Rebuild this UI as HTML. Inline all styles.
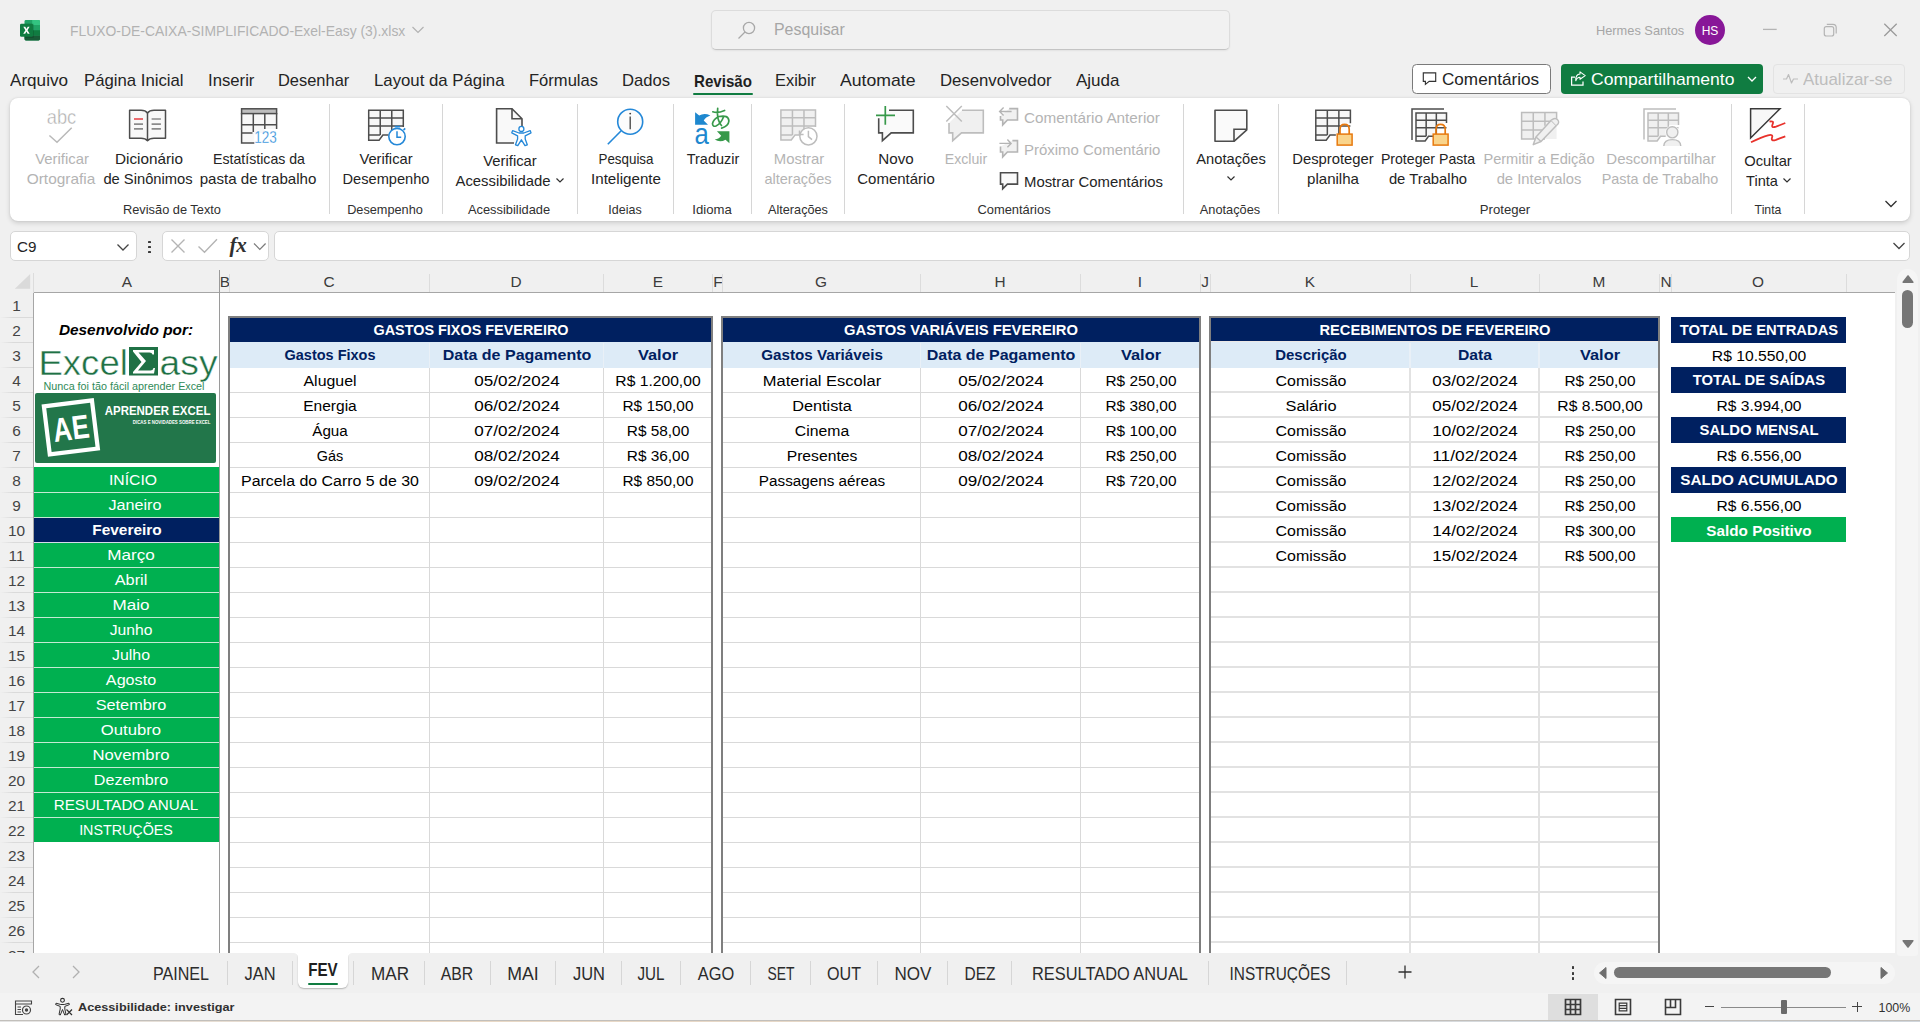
<!DOCTYPE html><html><head><meta charset="utf-8"><title>Excel</title><style>
*{box-sizing:border-box;margin:0;padding:0}
html,body{width:1920px;height:1022px;overflow:hidden;background:#f0f0f0;font-family:"Liberation Sans",sans-serif;}
#root{position:relative;width:1920px;height:1022px;overflow:hidden;background:#f0f0f0}
.t{position:absolute;white-space:nowrap;font-family:"Liberation Sans",sans-serif;color:#242424}
svg{position:absolute;overflow:visible}
.tab{font-size:17px;color:#242424;}
.tabb{font-size:16.4px;color:#1f1f1f;font-weight:bold;}
.ttl{font-size:14.4px;color:#b2b2b2;}
.srch{font-size:16.6px;color:#a6a6a6;}
.rl{font-size:14.6px;color:#242424;}
.rld{font-size:14.6px;color:#b4b4b4;}
.gl{font-size:12.6px;color:#303030;}
.hd{font-size:15.4px;color:#3c3c3c;}
.c{font-size:15.3px;color:#000;}
.cn{font-size:15.4px;color:#000;}
.cb{font-size:15px;color:#fff;font-weight:bold;}
.cbn{font-size:15px;color:#002060;font-weight:bold;}
.sb{font-size:15.3px;color:#fff;}
.sbb{font-size:15px;color:#fff;font-weight:bold;}
.st{font-size:16.4px;color:#2b2b2b;}
.stb{font-size:16.4px;color:#1f1f1f;font-weight:bold;}
.stat{font-size:11.8px;color:#303030;font-weight:bold;}
.dev{font-size:15.4px;color:#000;font-weight:bold;font-style:italic;}
</style></head><body><div id="root">
<svg style="left:20px;top:19.5px" width="20" height="20.5" viewBox="0 0 20 20" preserveAspectRatio="none">
<rect x="4.5" y="0" width="15.5" height="20" rx="1.4" fill="#21a366"/>
<path d="M12.2 0 H18.6 Q20 0 20 1.4 V5 H12.2 Z" fill="#33c481"/>
<rect x="4.5" y="5" width="7.7" height="5" fill="#107c41"/>
<rect x="12.2" y="5" width="7.8" height="5" fill="#21a366"/>
<rect x="4.5" y="10" width="7.7" height="5" fill="#185c37"/>
<rect x="12.2" y="10" width="7.8" height="5" fill="#107c41"/>
<path d="M4.5 15 H20 V18.6 Q20 20 18.6 20 H5.9 Q4.5 20 4.5 18.6 Z" fill="#185c37"/>
<rect x="4.5" y="3.7" width="9.2" height="13.6" fill="#000" opacity="0.18"/>
<rect x="0" y="3.7" width="13" height="12.6" rx="1.3" fill="#107c41"/>
<path d="M3.3 6.5 L5.3 6.5 L6.5 8.9 L7.7 6.5 L9.6 6.5 L7.5 10 L9.7 13.5 L7.7 13.5 L6.4 11.1 L5.2 13.5 L3.2 13.5 L5.4 10 Z" fill="#fff"/>
</svg>
<div class="t ttl" style="left:70px;top:18.5px;line-height:24px;transform:scaleX(0.9662);transform-origin:left center;">FLUXO-DE-CAIXA-SIMPLIFICADO-Exel-Easy (3).xlsx</div>
<svg style="left:411px;top:25px" width="14" height="10" viewBox="0 0 14 10"><path d="M1.5 2 L7 7.5 L12.5 2" fill="none" stroke="#b2b2b2" stroke-width="1.2"/></svg>
<div style="position:absolute;left:711px;top:10px;width:519px;height:40px;border:1px solid #dcdcdc;border-bottom:1px solid #c4c4c4;border-radius:5px;background:#f1f1f1;box-shadow:0 1px 2px rgba(0,0,0,0.06)"></div>
<svg style="left:736px;top:20px" width="22" height="20" viewBox="0 0 22 20"><circle cx="13" cy="8" r="5.6" fill="none" stroke="#a8a8a8" stroke-width="1.3"/><path d="M9 12 L2.5 18.5" stroke="#a8a8a8" stroke-width="1.3" fill="none"/></svg>
<div class="t srch" style="left:773.5px;top:17.5px;line-height:24px;transform:scaleX(0.9591);transform-origin:left center;">Pesquisar</div>
<div class="t " style="left:1596px;top:18.5px;line-height:24px;font-size:12.8px;color:#a6a6a6">Hermes Santos</div>
<div style="position:absolute;left:1695px;top:15px;width:30px;height:30px;border-radius:50%;background:#881798"></div>
<div class="t " style="left:1695.0px;top:18.5px;width:30px;line-height:24px;text-align:center;font-size:12px;color:#fff">HS</div>
<svg style="left:1760px;top:20px" width="140" height="22" viewBox="0 0 140 22"><path d="M3 9.4 H16.7" stroke="#b4b4b4" stroke-width="1.3"/><rect x="64.3" y="6.6" width="9.4" height="9.4" rx="2" fill="none" stroke="#b4b4b4" stroke-width="1.2"/><path d="M66.8 4.3 H73 Q76.2 4.3 76.2 7.5 V13.5" fill="none" stroke="#b4b4b4" stroke-width="1.2"/><path d="M124.3 3.8 L136.7 16 M136.7 3.8 L124.3 16" stroke="#9a9a9a" stroke-width="1.25"/></svg>
<div class="t tab" style="left:9.5px;top:69.0px;line-height:24px;transform:scaleX(1.0062);transform-origin:left center;">Arquivo</div>
<div class="t tab" style="left:84.25px;top:69.0px;line-height:24px;transform:scaleX(0.9840);transform-origin:left center;">Página Inicial</div>
<div class="t tab" style="left:208.2px;top:69.0px;line-height:24px;transform:scaleX(0.9824);transform-origin:left center;">Inserir</div>
<div class="t tab" style="left:278.25px;top:69.0px;line-height:24px;transform:scaleX(0.9666);transform-origin:left center;">Desenhar</div>
<div class="t tab" style="left:374px;top:69.0px;line-height:24px;transform:scaleX(0.9862);transform-origin:left center;">Layout da Página</div>
<div class="t tab" style="left:529px;top:69.0px;line-height:24px;transform:scaleX(0.9739);transform-origin:left center;">Fórmulas</div>
<div class="t tab" style="left:622px;top:69.0px;line-height:24px;transform:scaleX(0.9768);transform-origin:left center;">Dados</div>
<div class="t tabb" style="left:693.5px;top:69.0px;line-height:24px;transform:scaleX(0.9221);transform-origin:left center;">Revisão</div>
<div class="t tab" style="left:775px;top:69.0px;line-height:24px;transform:scaleX(0.9645);transform-origin:left center;">Exibir</div>
<div class="t tab" style="left:840px;top:69.0px;line-height:24px;transform:scaleX(1.0376);transform-origin:left center;">Automate</div>
<div class="t tab" style="left:940px;top:69.0px;line-height:24px;transform:scaleX(0.9833);transform-origin:left center;">Desenvolvedor</div>
<div class="t tab" style="left:1076px;top:69.0px;line-height:24px;transform:scaleX(1.0005);transform-origin:left center;">Ajuda</div>
<div style="position:absolute;left:693px;top:92.5px;width:60px;height:2.8px;background:#107c41;border-radius:1.4px"></div>
<div style="position:absolute;left:1412px;top:64px;width:139px;height:30px;border:1px solid #7a7a7a;border-radius:4.5px;background:#fff"></div>
<svg style="left:0px;top:0px" width="1920" height="100" viewBox="0 0 1920 100"><path d="M1423.3 72.8 H1435.7 V81.3 H1429.2 L1425.4 84.4 V81.3 H1423.3 Z" fill="none" stroke="#333" stroke-width="1.15"/></svg>
<div class="t tab" style="left:1442px;top:68.0px;line-height:24px;transform:scaleX(1.0065);transform-origin:left center;">Comentários</div>
<div style="position:absolute;left:1561px;top:64px;width:202px;height:30px;border-radius:4px;background:#107c41"></div>
<svg style="left:0px;top:0px" width="1920" height="100" viewBox="0 0 1920 100"><path d="M1575 77 H1571.6 V85.2 H1583 V81.6" fill="none" stroke="#fff" stroke-width="1.25"/><path d="M1580 71.9 L1585.2 75.6 L1580 79.3 V77.2 Q1577 77.3 1575.8 80.8 Q1575.4 74.3 1580 74 Z" fill="none" stroke="#fff" stroke-width="1.1" stroke-linejoin="round"/></svg>
<div class="t tab" style="left:1591px;top:68.0px;line-height:24px;transform:scaleX(1.0331);transform-origin:left center;color:#fff">Compartilhamento</div>
<svg style="left:1746px;top:75px" width="12" height="8" viewBox="0 0 12 8"><path d="M2 2 L6 6 L10 2" fill="none" stroke="#fff" stroke-width="1.3"/></svg>
<div style="position:absolute;left:1773px;top:64px;width:132px;height:30px;border:1px solid #e3e3e3;border-radius:4px;background:#f0f0f0"></div>
<svg style="left:1782px;top:72px" width="18" height="14" viewBox="0 0 18 14"><path d="M1 7 H4.5 L6.5 2.5 L9.5 11 L11.5 7 H16" fill="none" stroke="#bdbdbd" stroke-width="1.2" stroke-linejoin="round"/></svg>
<div class="t tab" style="left:1803px;top:68.0px;line-height:24px;transform:scaleX(0.9971);transform-origin:left center;color:#bdbdbd">Atualizar-se</div>
<div style="position:absolute;left:10px;top:98px;width:1900px;height:123px;background:#fff;border-radius:8px;box-shadow:0 2px 5px rgba(0,0,0,0.15),0 0 2px rgba(0,0,0,0.10)"></div>
<div style="position:absolute;left:329px;top:104px;width:1px;height:110px;background:#d6d6d6"></div>
<div style="position:absolute;left:442px;top:104px;width:1px;height:110px;background:#d6d6d6"></div>
<div style="position:absolute;left:577px;top:104px;width:1px;height:110px;background:#d6d6d6"></div>
<div style="position:absolute;left:673px;top:104px;width:1px;height:110px;background:#d6d6d6"></div>
<div style="position:absolute;left:751px;top:104px;width:1px;height:110px;background:#d6d6d6"></div>
<div style="position:absolute;left:844px;top:104px;width:1px;height:110px;background:#d6d6d6"></div>
<div style="position:absolute;left:1183px;top:104px;width:1px;height:110px;background:#d6d6d6"></div>
<div style="position:absolute;left:1278px;top:104px;width:1px;height:110px;background:#d6d6d6"></div>
<div style="position:absolute;left:1731px;top:104px;width:1px;height:110px;background:#d6d6d6"></div>
<div style="position:absolute;left:1804px;top:104px;width:1px;height:110px;background:#d6d6d6"></div>
<div class="t gl" style="left:-28.5px;top:197.5px;width:400px;line-height:24px;text-align:center;transform:scaleX(1.0163);transform-origin:center center;">Revisão de Texto</div>
<div class="t gl" style="left:185.39999999999998px;top:197.5px;width:400px;line-height:24px;text-align:center;transform:scaleX(1.0107);transform-origin:center center;">Desempenho</div>
<div class="t gl" style="left:309.4px;top:197.5px;width:400px;line-height:24px;text-align:center;transform:scaleX(1.0211);transform-origin:center center;">Acessibilidade</div>
<div class="t gl" style="left:424.9px;top:197.5px;width:400px;line-height:24px;text-align:center;transform:scaleX(0.9889);transform-origin:center center;">Ideias</div>
<div class="t gl" style="left:511.75px;top:197.5px;width:400px;line-height:24px;text-align:center;transform:scaleX(1.0444);transform-origin:center center;">Idioma</div>
<div class="t gl" style="left:597.5px;top:197.5px;width:400px;line-height:24px;text-align:center;transform:scaleX(1.0079);transform-origin:center center;">Alterações</div>
<div class="t gl" style="left:814.1px;top:197.5px;width:400px;line-height:24px;text-align:center;transform:scaleX(1.0255);transform-origin:center center;">Comentários</div>
<div class="t gl" style="left:1030.25px;top:197.5px;width:400px;line-height:24px;text-align:center;transform:scaleX(1.0161);transform-origin:center center;">Anotações</div>
<div class="t gl" style="left:1304.75px;top:197.5px;width:400px;line-height:24px;text-align:center;transform:scaleX(1.0450);transform-origin:center center;">Proteger</div>
<div class="t gl" style="left:1568.2px;top:197.5px;width:400px;line-height:24px;text-align:center;transform:scaleX(0.9730);transform-origin:center center;">Tinta</div>
<div class="t rld" style="left:-138.1px;top:147.0px;width:400px;line-height:24px;text-align:center;transform:scaleX(1.0191);transform-origin:center center;">Verificar</div>
<div class="t rld" style="left:-138.75px;top:167.0px;width:400px;line-height:24px;text-align:center;transform:scaleX(1.0552);transform-origin:center center;">Ortografia</div>
<div class="t rl" style="left:-51.5px;top:147.0px;width:400px;line-height:24px;text-align:center;transform:scaleX(1.0475);transform-origin:center center;">Dicionário</div>
<div class="t rl" style="left:-52.099999999999994px;top:167.0px;width:400px;line-height:24px;text-align:center;transform:scaleX(1.0089);transform-origin:center center;">de Sinônimos</div>
<div class="t rl" style="left:58.5px;top:147.0px;width:400px;line-height:24px;text-align:center;transform:scaleX(0.9690);transform-origin:center center;">Estatísticas da</div>
<div class="t rl" style="left:58.39999999999998px;top:167.0px;width:400px;line-height:24px;text-align:center;transform:scaleX(1.0347);transform-origin:center center;">pasta de trabalho</div>
<div class="t rl" style="left:185.89999999999998px;top:147.0px;width:400px;line-height:24px;text-align:center;transform:scaleX(1.0097);transform-origin:center center;">Verificar</div>
<div class="t rl" style="left:186.0px;top:167.0px;width:400px;line-height:24px;text-align:center;transform:scaleX(1.0018);transform-origin:center center;">Desempenho</div>
<div class="t rl" style="left:310.0px;top:149.0px;width:400px;line-height:24px;text-align:center;transform:scaleX(1.0144);transform-origin:center center;">Verificar</div>
<div class="t rl" style="left:303.0px;top:169.0px;width:400px;line-height:24px;text-align:center;transform:scaleX(1.0179);transform-origin:center center;">Acessibilidade</div>
<svg style="left:554.5px;top:177px" width="10" height="7" viewBox="0 0 10 7"><path d="M1.5 1.5 L5 5 L8.5 1.5" fill="none" stroke="#303030" stroke-width="1.2"/></svg>
<div class="t rl" style="left:425.75px;top:147.0px;width:400px;line-height:24px;text-align:center;transform:scaleX(0.9157);transform-origin:center center;">Pesquisa</div>
<div class="t rl" style="left:425.5px;top:167.0px;width:400px;line-height:24px;text-align:center;transform:scaleX(1.0389);transform-origin:center center;">Inteligente</div>
<div class="t rl" style="left:512.5px;top:147.0px;width:400px;line-height:24px;text-align:center;transform:scaleX(0.9905);transform-origin:center center;">Traduzir</div>
<div class="t rld" style="left:598.5px;top:147.0px;width:400px;line-height:24px;text-align:center;transform:scaleX(1.0206);transform-origin:center center;">Mostrar</div>
<div class="t rld" style="left:598.1px;top:167.0px;width:400px;line-height:24px;text-align:center;transform:scaleX(0.9983);transform-origin:center center;">alterações</div>
<div class="t rl" style="left:696.0px;top:147.0px;width:400px;line-height:24px;text-align:center;transform:scaleX(1.0415);transform-origin:center center;">Novo</div>
<div class="t rl" style="left:695.75px;top:167.0px;width:400px;line-height:24px;text-align:center;transform:scaleX(1.0269);transform-origin:center center;">Comentário</div>
<div class="t rld" style="left:765.75px;top:147.0px;width:400px;line-height:24px;text-align:center;transform:scaleX(0.9701);transform-origin:center center;">Excluir</div>
<div class="t rl" style="left:1031.0px;top:147.0px;width:400px;line-height:24px;text-align:center;transform:scaleX(1.0073);transform-origin:center center;">Anotações</div>
<svg style="left:1225.5px;top:174.5px" width="10" height="7" viewBox="0 0 10 7"><path d="M1.5 1.5 L5 5 L8.5 1.5" fill="none" stroke="#303030" stroke-width="1.2"/></svg>
<div class="t rl" style="left:1132.5px;top:147.0px;width:400px;line-height:24px;text-align:center;transform:scaleX(1.0144);transform-origin:center center;">Desproteger</div>
<div class="t rl" style="left:1132.75px;top:167.0px;width:400px;line-height:24px;text-align:center;transform:scaleX(1.0332);transform-origin:center center;">planilha</div>
<div class="t rl" style="left:1228.4px;top:147.0px;width:400px;line-height:24px;text-align:center;transform:scaleX(0.9678);transform-origin:center center;">Proteger Pasta</div>
<div class="t rl" style="left:1228.4px;top:167.0px;width:400px;line-height:24px;text-align:center;transform:scaleX(1.0147);transform-origin:center center;">de Trabalho</div>
<div class="t rld" style="left:1338.9px;top:147.0px;width:400px;line-height:24px;text-align:center;transform:scaleX(1.0008);transform-origin:center center;">Permitir a Edição</div>
<div class="t rld" style="left:1339.4px;top:167.0px;width:400px;line-height:24px;text-align:center;transform:scaleX(1.0138);transform-origin:center center;">de Intervalos</div>
<div class="t rld" style="left:1461.0px;top:147.0px;width:400px;line-height:24px;text-align:center;transform:scaleX(1.0302);transform-origin:center center;">Descompartilhar</div>
<div class="t rld" style="left:1460.4px;top:167.0px;width:400px;line-height:24px;text-align:center;transform:scaleX(0.9852);transform-origin:center center;">Pasta de Trabalho</div>
<div class="t rl" style="left:1568.0px;top:149.0px;width:400px;line-height:24px;text-align:center;transform:scaleX(1.0094);transform-origin:center center;">Ocultar</div>
<div class="t rl" style="left:1561.5px;top:169.0px;width:400px;line-height:24px;text-align:center;transform:scaleX(0.9995);transform-origin:center center;">Tinta</div>
<svg style="left:1781.5px;top:177px" width="10" height="7" viewBox="0 0 10 7"><path d="M1.5 1.5 L5 5 L8.5 1.5" fill="none" stroke="#303030" stroke-width="1.2"/></svg>
<div class="t rld" style="left:1024px;top:106.0px;line-height:24px;transform:scaleX(1.0474);transform-origin:left center;">Comentário Anterior</div>
<div class="t rld" style="left:1024px;top:138.0px;line-height:24px;transform:scaleX(1.0258);transform-origin:left center;">Próximo Comentário</div>
<div class="t rl" style="left:1024px;top:170.0px;line-height:24px;transform:scaleX(1.0198);transform-origin:left center;">Mostrar Comentários</div>
<svg style="left:1884px;top:199px" width="14" height="10" viewBox="0 0 14 10"><path d="M1.5 2 L7 7.5 L12.5 2" fill="none" stroke="#303030" stroke-width="1.3"/></svg>
<svg style="left:0;top:0" width="1920" height="230" viewBox="0 0 1920 230">
<text x="46.8" y="124" font-family="Liberation Sans" font-size="20.3" fill="#b0b0b0" textLength="29.4" lengthAdjust="spacingAndGlyphs" stroke="#fff" stroke-width="0.4">abc</text>
<path d="M49.4 135.5 L57 142.3 L71.7 127.8" fill="none" stroke="#b9b9b9" stroke-width="1.5"/>
<path d="M129.6 110.3 H141 Q145.5 110.3 147.5 113 Q149.5 110.3 154 110.3 H165.5 V138.3 H154 Q149.5 138.3 147.5 140.7 Q145.5 138.3 141 138.3 H129.6 Z" fill="#f8f8f8" stroke="#4d4d4d" stroke-width="1.5" stroke-linejoin="round"/><path d="M147.5 113 V140.7" stroke="#4d4d4d" stroke-width="1.5"/>
<path d="M134 119 H143" stroke="#e8484d" stroke-width="1.6"/>
<path d="M134 124.1 H143 M134 128.9 H143 M151.6 119 H160.9 M151.6 124.1 H160.9 M151.6 128.9 H160.9" stroke="#8a8a8a" stroke-width="1.6"/>
<path d="M241.6 113.5 H276.6 V129 H265 V132.9 H254.3 V143.1 H241.6 Z" fill="#f7f7f7"/>
<rect x="241.6" y="108.8" width="35" height="4.8" fill="#bdbdbd" stroke="#4d4d4d" stroke-width="1.5"/>
<path d="M241.6 113 V143.1 H254.3 M276.6 113 V129 M241.6 124.8 H276.6 M241.6 132.9 H252.5 M253.3 113.5 V132 M264.8 113.5 V129" fill="none" stroke="#4d4d4d" stroke-width="1.5"/>
<text x="254.3" y="143.3" font-family="Liberation Sans" font-size="16.6" fill="#2488d8" textLength="22.6" lengthAdjust="spacingAndGlyphs" stroke="#fff" stroke-width="0.3">123</text>
<g transform="translate(368.7,110.2)" fill="none" stroke="#4d4d4d" stroke-width="1.5"><path d="M0 0 H34.6 V16.9 H23.066666666666666 V24.9 H14.186 L10.38 30 H0 Z" fill="#f7f7f7" stroke="none"/><path d="M34.6 16.9 V0 H0 V30 H10.38 L14.186 24.9 H20.067999999999998"/><path d="M0 7.800000000000001 H34.6 M0 15.9 H34.6 M0 24.9 H11.533333333333333 M11.533333333333333 0 V24.9 M23.066666666666666 0 V24.9"/></g>
<circle cx="397" cy="136.6" r="8.2" fill="#fff" stroke="#2488d8" stroke-width="1.6"/><path d="M397 131.2 V137.2 H401.2" fill="none" stroke="#2488d8" stroke-width="1.5"/><path d="M394.7 126.6 H400.1 M403.6 130 L405.2 128.3" fill="none" stroke="#2488d8" stroke-width="1.7"/>
<path d="M496.6 108.8 H512 L522 118.8 V143 H496.6 Z" fill="#f9f9f9"/>
<path d="M522 126 V118.8 L512 108.8 H496.6 V143 H514" fill="none" stroke="#4d4d4d" stroke-width="1.6"/><path d="M512 108.8 V118.8 H522" fill="none" stroke="#4d4d4d" stroke-width="1.6"/>
<path d="M512.6 130.6 L519 133 H523.8 L530.2 130.6 L531 132.8 L525.2 135.8 V139 L527.3 144.8 L525 145.7 L521.4 139.8 L517.8 145.7 L515.5 144.8 L517.6 139 V135.8 L511.8 132.8 Z" fill="#fff" stroke="#2488d8" stroke-width="1.3" stroke-linejoin="round"/><circle cx="521.4" cy="128.9" r="2.5" fill="#fff" stroke="#2488d8" stroke-width="1.3"/>
<circle cx="630.2" cy="121.7" r="12.5" fill="#fcfcfc" stroke="#2488d8" stroke-width="1.6"/><path d="M621.2 130.7 L607.8 144.3" stroke="#2488d8" stroke-width="1.6"/><path d="M630.2 116.6 V129.2" stroke="#404040" stroke-width="1.3"/><circle cx="630.2" cy="113.6" r="0.95" fill="#404040"/>
<path d="M695.1 112.2 L699.2 115.6 Q704 112.5 710.4 115.4 Q705.5 117 703.7 120.4 L708 124.7 H695.1 Z" fill="#1e88cf"/>
<text x="694.6" y="143.7" font-family="Liberation Sans" font-size="30" fill="#1e88cf" textLength="14.3" lengthAdjust="spacingAndGlyphs">a</text>
<path d="M712.8 111.8 Q717.5 113.6 724.6 110.5 M717.7 108.3 Q717 116 718.5 120 Q719.5 123.5 721.5 125.5 M723.5 117 Q721 123.5 716 126 Q712.5 127 712.5 123.5 Q713.5 119 719 116.5 Q728.5 114.5 728.9 121 Q728.5 126 721.6 128.1" fill="none" stroke="#37994a" stroke-width="1.7" stroke-linecap="round"/>
<path d="M716.9 131.2 H729.4 V143.2 L725.5 139.8 Q720 143 714.7 139.6 Q719.5 138.5 721.2 135.7 Z" fill="#37994a"/>
<g transform="translate(780.9,110)" fill="none" stroke="#bdbdbd" stroke-width="1.5"><path d="M0 0 H34.6 V16.9 H23.066666666666666 V24.9 H14.186 L10.38 30 H0 Z" fill="#f0f0f0" stroke="none"/><path d="M34.6 16.9 V0 H0 V30 H10.38 L14.186 24.9 H20.067999999999998"/><path d="M0 7.800000000000001 H34.6 M0 15.9 H34.6 M0 24.9 H11.533333333333333 M11.533333333333333 0 V24.9 M23.066666666666666 0 V24.9"/></g>
<circle cx="808.4" cy="136.3" r="8.6" fill="#fff" stroke="#bdbdbd" stroke-width="1.5"/><path d="M808.4 130.8 V136.6 L812 139.6 M799.5 130.5 V134.4 H803.6" fill="none" stroke="#bdbdbd" stroke-width="1.5"/>
<path d="M889 110.2 H913.3 V132.9 H891.2 L882.4 140.7 V132.9 H878.7 V118.3" fill="#fafafa" stroke="#4d4d4d" stroke-width="1.6"/>
<path d="M885.3 106.1 V124.8 M876 115.3 H895" stroke="#37994a" stroke-width="1.7"/>
<path d="M962 110.2 H983.3 V132.9 H961.5 L952.7 140.7 V132.9 H949 V123" fill="#f0f0f0" stroke="#bdbdbd" stroke-width="1.6"/>
<path d="M946.3 106 L961.8 121.5 M961.8 106 L946.3 121.5" stroke="#bdbdbd" stroke-width="1.5"/>
<g transform="translate(0,0)" fill="none" stroke="#b4b4b4" stroke-width="1.6"><path d="M1009.2 108.6 H1017.5 V120 H1007.4 L1002.7 124.9 V120 H1000.5 V116" fill="#f1f1f1"/><path d="M1011.6 111.5 H999.8 M1003.6 107.5 L999.6 111.5 L1003.6 115.5" stroke-width="1.4"/></g>
<g transform="translate(0,32)" fill="none" stroke="#b4b4b4" stroke-width="1.6"><path d="M1012.4 108.6 H1017.5 V120 H1007.4 L1002.7 124.9 V120 H1000.5 V114.5" fill="#f1f1f1"/><path d="M999.4 111.4 H1010.8 M1007.4 107.4 L1011.1 111.4 L1007.4 115.2" stroke-width="1.4"/></g>
<g transform="translate(0,64.1)" fill="none" stroke="#4d4d4d" stroke-width="1.6"><path d="M1000.5 108.6 H1017.5 V120 H1007.4 L1002.7 124.7 V120 H1000.5 Z" fill="#fafafa" stroke-linejoin="miter"/></g>
<path d="M1215 110.3 H1246.8 V129.8 L1234 141.3 H1215 Z" fill="#fafafa" stroke="#4d4d4d" stroke-width="1.6" stroke-linejoin="round"/><path d="M1246.8 129.3 H1234 V141.3" fill="none" stroke="#4d4d4d" stroke-width="1.6"/>
<g transform="translate(1315.8,110.2)" fill="none" stroke="#4d4d4d" stroke-width="1.5"><path d="M0 0 H34.6 V13 H23.066666666666666 V24.9 H14.186 L10.38 30 H0 Z" fill="#f7f7f7" stroke="none"/><path d="M34.6 13 V0 H0 V30 H10.38 L14.186 24.9 H20.067999999999998"/><path d="M0 7.800000000000001 H34.6 M0 15.9 H34.6 M0 24.9 H11.533333333333333 M11.533333333333333 0 V24.9 M23.066666666666666 0 V24.9"/></g>
<path d="M1340.0 134.0 V129.5 Q1340.0 124.4 1344.6000000000001 124.4 Q1349.2 124.4 1349.2 129.5 V134.0" fill="none" stroke="#e7790f" stroke-width="1.7"/><rect x="1337.2" y="134.1" width="14.9" height="11" fill="#f9d48b" stroke="#e7790f" stroke-width="1.5"/>
<path d="M1412 140 V109 H1444" fill="none" stroke="#4d4d4d" stroke-width="1.5"/>
<g transform="translate(1416,113)" fill="none" stroke="#4d4d4d" stroke-width="1.5"><path d="M0 0 H30.5 V10 H20.333333333333332 V23.24 H12.504999999999999 L9.15 28 H0 Z" fill="#f7f7f7" stroke="none"/><path d="M30.5 10 V0 H0 V28 H9.15 L12.504999999999999 23.24 H17.689999999999998"/><path d="M0 7.28 H30.5 M0 14.84 H30.5 M0 23.24 H10.166666666666666 M10.166666666666666 0 V23.24 M20.333333333333332 0 V23.24"/></g>
<path d="M1436.0 134.0 V129.5 Q1436.0 124.4 1440.6000000000001 124.4 Q1445.2 124.4 1445.2 129.5 V134.0" fill="none" stroke="#e7790f" stroke-width="1.7"/><rect x="1433.2" y="134.1" width="14.9" height="11" fill="#f9d48b" stroke="#e7790f" stroke-width="1.5"/>
<g transform="translate(1521.6,112.5)" fill="none" stroke="#bdbdbd" stroke-width="1.5"><path d="M0 0 H35 V26.5 H0 Z" fill="#f0f0f0" stroke="none"/><path d="M35 8 V0 H0 V26.5 H23.333333333333332"/><path d="M0 8.745000000000001 H35 M0 17.490000000000002 H25.333333333333332 M11.666666666666666 0 V26.5 M23.333333333333332 0 V13.25"/></g>
<path d="M1551.2 120.3 L1556.4 125.5 L1541 141.5 L1533.3 144.6 L1536 137 Z" fill="#f0f0f0" stroke="#bdbdbd" stroke-width="1.5" stroke-linejoin="round"/><path d="M1551.2 120.3 Q1555 117 1557.6 119.8 Q1560.2 122.6 1556.4 125.5 M1536 137 L1541 141.5" fill="#f0f0f0" stroke="#bdbdbd" stroke-width="1.4"/>
<path d="M1644 139.5 V109 H1676" fill="none" stroke="#bdbdbd" stroke-width="1.5"/>
<g transform="translate(1648,113)" fill="none" stroke="#bdbdbd" stroke-width="1.5"><path d="M0 0 H30.5 V12 H20.333333333333332 V23.24 H12.504999999999999 L9.15 28 H0 Z" fill="#f0f0f0" stroke="none"/><path d="M30.5 12 V0 H0 V28 H9.15 L12.504999999999999 23.24 H17.689999999999998"/><path d="M0 7.28 H30.5 M0 14.84 H30.5 M0 23.24 H10.166666666666666 M10.166666666666666 0 V23.24 M20.333333333333332 0 V23.24"/></g>
<circle cx="1672.3" cy="132.3" r="5.6" fill="#f0f0f0" stroke="#fff" stroke-width="2.6"/><circle cx="1672.3" cy="132.3" r="5.6" fill="#f0f0f0" stroke="#bdbdbd" stroke-width="1.4"/><path d="M1663.8 146 Q1664 139.6 1672.3 139.6 Q1680.6 139.6 1680.8 146" fill="#f0f0f0" stroke="#bdbdbd" stroke-width="1.4"/>
<path d="M1750.6 108.7 H1780 L1750.6 138 Z" fill="#f8f8f8" stroke="#3a3a3a" stroke-width="1.5" stroke-linejoin="miter"/>
<path d="M1769.5 121.5 Q1774.5 120.5 1772.5 124.5 Q1771 128.3 1776 126.7 L1785.3 123 M1751 142.3 Q1762 137 1768 135.3 Q1773.5 133.8 1772 137.8 Q1770.8 141.5 1776 139.8 L1785.3 136.3" fill="none" stroke="#e8322c" stroke-width="1.8"/>
</svg>
<div style="position:absolute;left:10px;top:231px;width:127px;height:30px;background:#fff;border:1px solid #d6d6d6;border-radius:5px"></div>
<div class="t " style="left:17px;top:234.5px;line-height:24px;font-size:15.2px;color:#242424">C9</div>
<svg style="left:116px;top:242px" width="14" height="10" viewBox="0 0 14 10"><path d="M1.5 2.5 L7 8 L12.5 2.5" fill="none" stroke="#444" stroke-width="1.3"/></svg>
<div style="position:absolute;left:148px;top:240.5px;width:2.6px;height:2.6px;background:#3a3a3a;border-radius:0.6px"></div>
<div style="position:absolute;left:148px;top:245.5px;width:2.6px;height:2.6px;background:#3a3a3a;border-radius:0.6px"></div>
<div style="position:absolute;left:148px;top:250.5px;width:2.6px;height:2.6px;background:#3a3a3a;border-radius:0.6px"></div>
<div style="position:absolute;left:162px;top:231px;width:107px;height:30px;background:#fff;border:1px solid #d6d6d6;border-radius:5px"></div>
<svg style="left:168px;top:236px" width="100" height="20" viewBox="0 0 100 20"><path d="M3.5 3.5 L16.5 16.5 M16.5 3.5 L3.5 16.5" stroke="#b4b4b4" stroke-width="1.4"/><path d="M30.5 10.5 L36.5 16.2 L49 3.2" fill="none" stroke="#b4b4b4" stroke-width="1.4"/><path d="M86 7.5 L91.8 13.3 L97.6 7.5" fill="none" stroke="#7a7a7a" stroke-width="1.2"/></svg>
<div class="t " style="left:229.5px;top:233.0px;line-height:24px;font-family:'Liberation Serif',serif;font-size:21px;font-weight:bold;color:#303030;letter-spacing:-0.3px"><i>fx</i></div>
<div style="position:absolute;left:274px;top:231px;width:1636px;height:30px;background:#fff;border:1px solid #d6d6d6;border-radius:5px"></div>
<svg style="left:1891.5px;top:240.5px" width="14" height="10" viewBox="0 0 14 10"><path d="M1.5 2 L7 7.5 L12.5 2" fill="none" stroke="#444" stroke-width="1.3"/></svg>
<div style="position:absolute;left:34px;top:293px;width:1861px;height:660px;background:#fff"></div>
<div style="position:absolute;left:0px;top:272px;width:1895px;height:21px;background:#f0f0f0"></div>
<div style="position:absolute;left:34px;top:292px;width:1861px;height:1px;background:#a6a6a6"></div>
<svg style="left:0px;top:270px" width="34" height="22" viewBox="0 0 34 22"><path d="M30.2 4 V18.7 H14.8 Z" fill="#dadada"/></svg>
<div style="position:absolute;left:33px;top:273px;width:1px;height:20px;background:#dcdcdc"></div>
<div class="t hd" style="left:107.0px;top:272.0px;width:40px;line-height:20px;text-align:center;">A</div>
<div class="t hd" style="left:205.0px;top:272.0px;width:40px;line-height:20px;text-align:center;">B</div>
<div style="position:absolute;left:229px;top:274px;width:1px;height:18px;background:#dcdcdc"></div>
<div class="t hd" style="left:309.0px;top:272.0px;width:40px;line-height:20px;text-align:center;">C</div>
<div style="position:absolute;left:429px;top:274px;width:1px;height:18px;background:#dcdcdc"></div>
<div class="t hd" style="left:496.0px;top:272.0px;width:40px;line-height:20px;text-align:center;">D</div>
<div style="position:absolute;left:603px;top:274px;width:1px;height:18px;background:#dcdcdc"></div>
<div class="t hd" style="left:638.0px;top:272.0px;width:40px;line-height:20px;text-align:center;">E</div>
<div style="position:absolute;left:712px;top:274px;width:1px;height:18px;background:#dcdcdc"></div>
<div class="t hd" style="left:698.0px;top:272.0px;width:40px;line-height:20px;text-align:center;">F</div>
<div style="position:absolute;left:722px;top:274px;width:1px;height:18px;background:#dcdcdc"></div>
<div class="t hd" style="left:801.0px;top:272.0px;width:40px;line-height:20px;text-align:center;">G</div>
<div style="position:absolute;left:920px;top:274px;width:1px;height:18px;background:#dcdcdc"></div>
<div class="t hd" style="left:980.0px;top:272.0px;width:40px;line-height:20px;text-align:center;">H</div>
<div style="position:absolute;left:1080px;top:274px;width:1px;height:18px;background:#dcdcdc"></div>
<div class="t hd" style="left:1120.0px;top:272.0px;width:40px;line-height:20px;text-align:center;">I</div>
<div style="position:absolute;left:1200px;top:274px;width:1px;height:18px;background:#dcdcdc"></div>
<div class="t hd" style="left:1185.0px;top:272.0px;width:40px;line-height:20px;text-align:center;">J</div>
<div style="position:absolute;left:1210px;top:274px;width:1px;height:18px;background:#dcdcdc"></div>
<div class="t hd" style="left:1290.0px;top:272.0px;width:40px;line-height:20px;text-align:center;">K</div>
<div style="position:absolute;left:1410px;top:274px;width:1px;height:18px;background:#dcdcdc"></div>
<div class="t hd" style="left:1454.0px;top:272.0px;width:40px;line-height:20px;text-align:center;">L</div>
<div style="position:absolute;left:1539px;top:274px;width:1px;height:18px;background:#dcdcdc"></div>
<div class="t hd" style="left:1579.0px;top:272.0px;width:40px;line-height:20px;text-align:center;">M</div>
<div style="position:absolute;left:1659px;top:274px;width:1px;height:18px;background:#dcdcdc"></div>
<div class="t hd" style="left:1646.0px;top:272.0px;width:40px;line-height:20px;text-align:center;">N</div>
<div style="position:absolute;left:1671px;top:274px;width:1px;height:18px;background:#dcdcdc"></div>
<div class="t hd" style="left:1738.0px;top:272.0px;width:40px;line-height:20px;text-align:center;">O</div>
<div style="position:absolute;left:1846px;top:274px;width:1px;height:18px;background:#dcdcdc"></div>
<div style="position:absolute;left:0px;top:293px;width:34px;height:660px;background:#f0f0f0"></div>
<div style="position:absolute;left:33px;top:293px;width:1px;height:660px;background:#a6a6a6"></div>
<div class="t hd" style="left:0.5px;top:294px;width:32px;line-height:24px;text-align:center;font-size:15.4px;color:#444">1</div>
<div style="position:absolute;left:0px;top:317px;width:33px;height:1px;background:linear-gradient(90deg,#f0f0f0,#dadada 40%)"></div>
<div class="t hd" style="left:0.5px;top:319px;width:32px;line-height:24px;text-align:center;font-size:15.4px;color:#444">2</div>
<div style="position:absolute;left:0px;top:342px;width:33px;height:1px;background:linear-gradient(90deg,#f0f0f0,#dadada 40%)"></div>
<div class="t hd" style="left:0.5px;top:344px;width:32px;line-height:24px;text-align:center;font-size:15.4px;color:#444">3</div>
<div style="position:absolute;left:0px;top:367px;width:33px;height:1px;background:linear-gradient(90deg,#f0f0f0,#dadada 40%)"></div>
<div class="t hd" style="left:0.5px;top:369px;width:32px;line-height:24px;text-align:center;font-size:15.4px;color:#444">4</div>
<div style="position:absolute;left:0px;top:392px;width:33px;height:1px;background:linear-gradient(90deg,#f0f0f0,#dadada 40%)"></div>
<div class="t hd" style="left:0.5px;top:394px;width:32px;line-height:24px;text-align:center;font-size:15.4px;color:#444">5</div>
<div style="position:absolute;left:0px;top:417px;width:33px;height:1px;background:linear-gradient(90deg,#f0f0f0,#dadada 40%)"></div>
<div class="t hd" style="left:0.5px;top:419px;width:32px;line-height:24px;text-align:center;font-size:15.4px;color:#444">6</div>
<div style="position:absolute;left:0px;top:442px;width:33px;height:1px;background:linear-gradient(90deg,#f0f0f0,#dadada 40%)"></div>
<div class="t hd" style="left:0.5px;top:444px;width:32px;line-height:24px;text-align:center;font-size:15.4px;color:#444">7</div>
<div style="position:absolute;left:0px;top:467px;width:33px;height:1px;background:linear-gradient(90deg,#f0f0f0,#dadada 40%)"></div>
<div class="t hd" style="left:0.5px;top:469px;width:32px;line-height:24px;text-align:center;font-size:15.4px;color:#444">8</div>
<div style="position:absolute;left:0px;top:492px;width:33px;height:1px;background:linear-gradient(90deg,#f0f0f0,#dadada 40%)"></div>
<div class="t hd" style="left:0.5px;top:494px;width:32px;line-height:24px;text-align:center;font-size:15.4px;color:#444">9</div>
<div style="position:absolute;left:0px;top:517px;width:33px;height:1px;background:linear-gradient(90deg,#f0f0f0,#dadada 40%)"></div>
<div class="t hd" style="left:0.5px;top:519px;width:32px;line-height:24px;text-align:center;font-size:15.4px;color:#444">10</div>
<div style="position:absolute;left:0px;top:542px;width:33px;height:1px;background:linear-gradient(90deg,#f0f0f0,#dadada 40%)"></div>
<div class="t hd" style="left:0.5px;top:544px;width:32px;line-height:24px;text-align:center;font-size:15.4px;color:#444">11</div>
<div style="position:absolute;left:0px;top:567px;width:33px;height:1px;background:linear-gradient(90deg,#f0f0f0,#dadada 40%)"></div>
<div class="t hd" style="left:0.5px;top:569px;width:32px;line-height:24px;text-align:center;font-size:15.4px;color:#444">12</div>
<div style="position:absolute;left:0px;top:592px;width:33px;height:1px;background:linear-gradient(90deg,#f0f0f0,#dadada 40%)"></div>
<div class="t hd" style="left:0.5px;top:594px;width:32px;line-height:24px;text-align:center;font-size:15.4px;color:#444">13</div>
<div style="position:absolute;left:0px;top:617px;width:33px;height:1px;background:linear-gradient(90deg,#f0f0f0,#dadada 40%)"></div>
<div class="t hd" style="left:0.5px;top:619px;width:32px;line-height:24px;text-align:center;font-size:15.4px;color:#444">14</div>
<div style="position:absolute;left:0px;top:642px;width:33px;height:1px;background:linear-gradient(90deg,#f0f0f0,#dadada 40%)"></div>
<div class="t hd" style="left:0.5px;top:644px;width:32px;line-height:24px;text-align:center;font-size:15.4px;color:#444">15</div>
<div style="position:absolute;left:0px;top:667px;width:33px;height:1px;background:linear-gradient(90deg,#f0f0f0,#dadada 40%)"></div>
<div class="t hd" style="left:0.5px;top:669px;width:32px;line-height:24px;text-align:center;font-size:15.4px;color:#444">16</div>
<div style="position:absolute;left:0px;top:692px;width:33px;height:1px;background:linear-gradient(90deg,#f0f0f0,#dadada 40%)"></div>
<div class="t hd" style="left:0.5px;top:694px;width:32px;line-height:24px;text-align:center;font-size:15.4px;color:#444">17</div>
<div style="position:absolute;left:0px;top:717px;width:33px;height:1px;background:linear-gradient(90deg,#f0f0f0,#dadada 40%)"></div>
<div class="t hd" style="left:0.5px;top:719px;width:32px;line-height:24px;text-align:center;font-size:15.4px;color:#444">18</div>
<div style="position:absolute;left:0px;top:742px;width:33px;height:1px;background:linear-gradient(90deg,#f0f0f0,#dadada 40%)"></div>
<div class="t hd" style="left:0.5px;top:744px;width:32px;line-height:24px;text-align:center;font-size:15.4px;color:#444">19</div>
<div style="position:absolute;left:0px;top:767px;width:33px;height:1px;background:linear-gradient(90deg,#f0f0f0,#dadada 40%)"></div>
<div class="t hd" style="left:0.5px;top:769px;width:32px;line-height:24px;text-align:center;font-size:15.4px;color:#444">20</div>
<div style="position:absolute;left:0px;top:792px;width:33px;height:1px;background:linear-gradient(90deg,#f0f0f0,#dadada 40%)"></div>
<div class="t hd" style="left:0.5px;top:794px;width:32px;line-height:24px;text-align:center;font-size:15.4px;color:#444">21</div>
<div style="position:absolute;left:0px;top:817px;width:33px;height:1px;background:linear-gradient(90deg,#f0f0f0,#dadada 40%)"></div>
<div class="t hd" style="left:0.5px;top:819px;width:32px;line-height:24px;text-align:center;font-size:15.4px;color:#444">22</div>
<div style="position:absolute;left:0px;top:842px;width:33px;height:1px;background:linear-gradient(90deg,#f0f0f0,#dadada 40%)"></div>
<div class="t hd" style="left:0.5px;top:844px;width:32px;line-height:24px;text-align:center;font-size:15.4px;color:#444">23</div>
<div style="position:absolute;left:0px;top:867px;width:33px;height:1px;background:linear-gradient(90deg,#f0f0f0,#dadada 40%)"></div>
<div class="t hd" style="left:0.5px;top:869px;width:32px;line-height:24px;text-align:center;font-size:15.4px;color:#444">24</div>
<div style="position:absolute;left:0px;top:892px;width:33px;height:1px;background:linear-gradient(90deg,#f0f0f0,#dadada 40%)"></div>
<div class="t hd" style="left:0.5px;top:894px;width:32px;line-height:24px;text-align:center;font-size:15.4px;color:#444">25</div>
<div style="position:absolute;left:0px;top:917px;width:33px;height:1px;background:linear-gradient(90deg,#f0f0f0,#dadada 40%)"></div>
<div class="t hd" style="left:0.5px;top:919px;width:32px;line-height:24px;text-align:center;font-size:15.4px;color:#444">26</div>
<div style="position:absolute;left:0px;top:942px;width:33px;height:1px;background:linear-gradient(90deg,#f0f0f0,#dadada 40%)"></div>
<div class="t hd" style="left:0.5px;top:944px;width:32px;line-height:24px;text-align:center;font-size:15.4px;color:#444">27</div>
<div class="t dev" style="left:-74.3px;top:318.3px;width:400px;line-height:24px;text-align:center;transform:scaleX(0.9997);transform-origin:center center;">Desenvolvido por:</div>
<svg style="left:34px;top:343px" width="186" height="52" viewBox="0 0 186 52"><text x="4.4" y="32" font-family="Liberation Sans" font-size="35.2" fill="#1f7145" textLength="89.5" lengthAdjust="spacingAndGlyphs" stroke="#fff" stroke-width="0.45">Excel</text><rect x="95" y="4" width="29" height="28.5" fill="#1f7145"/><g transform="translate(-1,0.5)"><path d="M100 6.5 H121 V11 H119.5 Q119 9 116.5 9 H105.5 L113 17.5 L105 27 H117.5 Q120 27 120.5 24.5 H122 L121 30 H100 V28.5 L108.5 18.5 L100 8 Z" fill="#fff"/></g><text x="125.6" y="32" font-family="Liberation Sans" font-size="35.2" fill="#1f7145" textLength="58" lengthAdjust="spacingAndGlyphs" stroke="#fff" stroke-width="0.45">asy</text><text x="9.5" y="47.3" font-family="Liberation Sans" font-size="10" fill="#2f8a57" textLength="161" lengthAdjust="spacingAndGlyphs">Nunca foi tão fácil aprender Excel</text></svg>
<div style="position:absolute;left:35px;top:393px;width:181px;height:70px;background:#22764a;border-radius:2px"></div>
<svg style="left:35px;top:393px" width="181" height="70" viewBox="0 0 181 70"><g transform="rotate(-7 35.9 34.7)"><rect x="11.7" y="10.2" width="48.4" height="48.4" fill="none" stroke="#fff" stroke-width="4.2"/><text x="36" y="46.8" font-family="Liberation Sans" font-weight="bold" font-size="33.5" fill="#fff" text-anchor="middle" textLength="36" lengthAdjust="spacingAndGlyphs">AE</text></g><text x="69.8" y="22" font-family="Liberation Sans" font-weight="bold" font-size="12.6" fill="#fff" textLength="105.6" lengthAdjust="spacingAndGlyphs">APRENDER EXCEL</text><text x="97.8" y="30.6" font-family="Liberation Sans" font-weight="bold" font-size="4.6" fill="#fff" textLength="77.6" lengthAdjust="spacingAndGlyphs">DICAS E NOVIDADES SOBRE EXCEL</text></svg>
<div style="position:absolute;left:34px;top:468px;width:185px;height:24px;background:#00b050"></div>
<div style="position:absolute;left:34px;top:492px;width:185px;height:1px;background:#c4ead3"></div>
<div class="t sb" style="left:-67.0px;top:467.8px;width:400px;line-height:24px;text-align:center;transform:scaleX(1.0267);transform-origin:center center;">INÍCIO</div>
<div style="position:absolute;left:34px;top:493px;width:185px;height:24px;background:#00b050"></div>
<div style="position:absolute;left:34px;top:517px;width:185px;height:1px;background:#c4ead3"></div>
<div class="t sb" style="left:-65.0px;top:492.8px;width:400px;line-height:24px;text-align:center;transform:scaleX(1.0562);transform-origin:center center;">Janeiro</div>
<div style="position:absolute;left:34px;top:518px;width:185px;height:24px;background:#002060"></div>
<div style="position:absolute;left:34px;top:542px;width:185px;height:1px;background:#d4dcea"></div>
<div class="t sbb" style="left:-73.0px;top:518.1px;width:400px;line-height:24px;text-align:center;transform:scaleX(1.0261);transform-origin:center center;">Fevereiro</div>
<div style="position:absolute;left:34px;top:543px;width:185px;height:24px;background:#00b050"></div>
<div style="position:absolute;left:34px;top:567px;width:185px;height:1px;background:#c4ead3"></div>
<div class="t sb" style="left:-69.0px;top:542.8px;width:400px;line-height:24px;text-align:center;transform:scaleX(1.1221);transform-origin:center center;">Março</div>
<div style="position:absolute;left:34px;top:568px;width:185px;height:24px;background:#00b050"></div>
<div style="position:absolute;left:34px;top:592px;width:185px;height:1px;background:#c4ead3"></div>
<div class="t sb" style="left:-69.0px;top:567.8px;width:400px;line-height:24px;text-align:center;transform:scaleX(1.0683);transform-origin:center center;">Abril</div>
<div style="position:absolute;left:34px;top:593px;width:185px;height:24px;background:#00b050"></div>
<div style="position:absolute;left:34px;top:617px;width:185px;height:1px;background:#c4ead3"></div>
<div class="t sb" style="left:-69.0px;top:592.8px;width:400px;line-height:24px;text-align:center;transform:scaleX(1.1157);transform-origin:center center;">Maio</div>
<div style="position:absolute;left:34px;top:618px;width:185px;height:24px;background:#00b050"></div>
<div style="position:absolute;left:34px;top:642px;width:185px;height:1px;background:#c4ead3"></div>
<div class="t sb" style="left:-69.0px;top:617.8px;width:400px;line-height:24px;text-align:center;transform:scaleX(1.0243);transform-origin:center center;">Junho</div>
<div style="position:absolute;left:34px;top:643px;width:185px;height:24px;background:#00b050"></div>
<div style="position:absolute;left:34px;top:667px;width:185px;height:1px;background:#c4ead3"></div>
<div class="t sb" style="left:-69.0px;top:642.8px;width:400px;line-height:24px;text-align:center;transform:scaleX(1.0389);transform-origin:center center;">Julho</div>
<div style="position:absolute;left:34px;top:668px;width:185px;height:24px;background:#00b050"></div>
<div style="position:absolute;left:34px;top:692px;width:185px;height:1px;background:#c4ead3"></div>
<div class="t sb" style="left:-69.0px;top:667.8px;width:400px;line-height:24px;text-align:center;transform:scaleX(1.0560);transform-origin:center center;">Agosto</div>
<div style="position:absolute;left:34px;top:693px;width:185px;height:24px;background:#00b050"></div>
<div style="position:absolute;left:34px;top:717px;width:185px;height:1px;background:#c4ead3"></div>
<div class="t sb" style="left:-69.0px;top:692.8px;width:400px;line-height:24px;text-align:center;transform:scaleX(1.0658);transform-origin:center center;">Setembro</div>
<div style="position:absolute;left:34px;top:718px;width:185px;height:24px;background:#00b050"></div>
<div style="position:absolute;left:34px;top:742px;width:185px;height:1px;background:#c4ead3"></div>
<div class="t sb" style="left:-69.0px;top:717.8px;width:400px;line-height:24px;text-align:center;transform:scaleX(1.0907);transform-origin:center center;">Outubro</div>
<div style="position:absolute;left:34px;top:743px;width:185px;height:24px;background:#00b050"></div>
<div style="position:absolute;left:34px;top:767px;width:185px;height:1px;background:#c4ead3"></div>
<div class="t sb" style="left:-69.0px;top:742.8px;width:400px;line-height:24px;text-align:center;transform:scaleX(1.0910);transform-origin:center center;">Novembro</div>
<div style="position:absolute;left:34px;top:768px;width:185px;height:24px;background:#00b050"></div>
<div style="position:absolute;left:34px;top:792px;width:185px;height:1px;background:#c4ead3"></div>
<div class="t sb" style="left:-69.0px;top:767.8px;width:400px;line-height:24px;text-align:center;transform:scaleX(1.0528);transform-origin:center center;">Dezembro</div>
<div style="position:absolute;left:34px;top:793px;width:185px;height:24px;background:#00b050"></div>
<div style="position:absolute;left:34px;top:817px;width:185px;height:1px;background:#c4ead3"></div>
<div class="t sb" style="left:-74.0px;top:792.8px;width:400px;line-height:24px;text-align:center;transform:scaleX(0.9933);transform-origin:center center;">RESULTADO ANUAL</div>
<div style="position:absolute;left:34px;top:818px;width:185px;height:24px;background:#00b050"></div>
<div class="t sb" style="left:-74.0px;top:817.8px;width:400px;line-height:24px;text-align:center;transform:scaleX(0.9341);transform-origin:center center;">INSTRUÇÕES</div>
<div style="position:absolute;left:34px;top:467px;width:185px;height:1px;background:#00b050"></div>
<div style="position:absolute;left:219px;top:270px;width:1px;height:683px;background:#9a9a9a"></div>
<div style="position:absolute;left:228px;top:316px;width:485px;height:640px;border:2px solid #7f7f7f;border-bottom:none;background:#fff"></div>
<div style="position:absolute;left:230px;top:318px;width:481px;height:24px;background:#002060"></div>
<div style="position:absolute;left:230px;top:342px;width:481px;height:26px;background:#ddebf7"></div>
<div class="t cb" style="left:270.5px;top:318.2px;width:400px;line-height:24px;text-align:center;transform:scaleX(0.9601);transform-origin:center center;">GASTOS FIXOS FEVEREIRO</div>
<div style="position:absolute;left:230px;top:392px;width:481px;height:1px;background:#d9d9d9"></div>
<div style="position:absolute;left:230px;top:417px;width:481px;height:1px;background:#d9d9d9"></div>
<div style="position:absolute;left:230px;top:442px;width:481px;height:1px;background:#d9d9d9"></div>
<div style="position:absolute;left:230px;top:467px;width:481px;height:1px;background:#d9d9d9"></div>
<div style="position:absolute;left:230px;top:492px;width:481px;height:1px;background:#d9d9d9"></div>
<div style="position:absolute;left:230px;top:517px;width:481px;height:1px;background:#d9d9d9"></div>
<div style="position:absolute;left:230px;top:542px;width:481px;height:1px;background:#d9d9d9"></div>
<div style="position:absolute;left:230px;top:567px;width:481px;height:1px;background:#d9d9d9"></div>
<div style="position:absolute;left:230px;top:592px;width:481px;height:1px;background:#d9d9d9"></div>
<div style="position:absolute;left:230px;top:617px;width:481px;height:1px;background:#d9d9d9"></div>
<div style="position:absolute;left:230px;top:642px;width:481px;height:1px;background:#d9d9d9"></div>
<div style="position:absolute;left:230px;top:667px;width:481px;height:1px;background:#d9d9d9"></div>
<div style="position:absolute;left:230px;top:692px;width:481px;height:1px;background:#d9d9d9"></div>
<div style="position:absolute;left:230px;top:717px;width:481px;height:1px;background:#d9d9d9"></div>
<div style="position:absolute;left:230px;top:742px;width:481px;height:1px;background:#d9d9d9"></div>
<div style="position:absolute;left:230px;top:767px;width:481px;height:1px;background:#d9d9d9"></div>
<div style="position:absolute;left:230px;top:792px;width:481px;height:1px;background:#d9d9d9"></div>
<div style="position:absolute;left:230px;top:817px;width:481px;height:1px;background:#d9d9d9"></div>
<div style="position:absolute;left:230px;top:842px;width:481px;height:1px;background:#d9d9d9"></div>
<div style="position:absolute;left:230px;top:867px;width:481px;height:1px;background:#d9d9d9"></div>
<div style="position:absolute;left:230px;top:892px;width:481px;height:1px;background:#d9d9d9"></div>
<div style="position:absolute;left:230px;top:917px;width:481px;height:1px;background:#d9d9d9"></div>
<div style="position:absolute;left:230px;top:942px;width:481px;height:1px;background:#d9d9d9"></div>
<div style="position:absolute;left:429px;top:343px;width:1px;height:25px;background:#e9f0f7"></div>
<div style="position:absolute;left:429px;top:368px;width:1px;height:590px;background:#d9d9d9"></div>
<div style="position:absolute;left:603px;top:343px;width:1px;height:25px;background:#e9f0f7"></div>
<div style="position:absolute;left:603px;top:368px;width:1px;height:590px;background:#d9d9d9"></div>
<div class="t cbn" style="left:129.5px;top:343.2px;width:400px;line-height:24px;text-align:center;transform:scaleX(0.9661);transform-origin:center center;">Gastos Fixos</div>
<div class="t cbn" style="left:316.5px;top:343.2px;width:400px;line-height:24px;text-align:center;transform:scaleX(1.0682);transform-origin:center center;">Data de Pagamento</div>
<div class="t cbn" style="left:458.0px;top:343.2px;width:400px;line-height:24px;text-align:center;transform:scaleX(1.0902);transform-origin:center center;">Valor</div>
<div class="t c" style="left:129.5px;top:368.8px;width:400px;line-height:24px;text-align:center;transform:scaleX(1.0384);transform-origin:center center;">Aluguel</div>
<div class="t cn" style="left:316.5px;top:368.5px;width:400px;line-height:24px;text-align:center;transform:scaleX(1.1093);transform-origin:center center;">05/02/2024</div>
<div class="t cn" style="left:458.0px;top:368.5px;width:400px;line-height:24px;text-align:center;transform:scaleX(1.0166);transform-origin:center center;">R$ 1.200,00</div>
<div class="t c" style="left:129.5px;top:393.8px;width:400px;line-height:24px;text-align:center;transform:scaleX(1.0145);transform-origin:center center;">Energia</div>
<div class="t cn" style="left:316.5px;top:393.5px;width:400px;line-height:24px;text-align:center;transform:scaleX(1.1093);transform-origin:center center;">06/02/2024</div>
<div class="t cn" style="left:458.0px;top:393.5px;width:400px;line-height:24px;text-align:center;transform:scaleX(0.9990);transform-origin:center center;">R$ 150,00</div>
<div class="t c" style="left:129.5px;top:418.8px;width:400px;line-height:24px;text-align:center;transform:scaleX(0.9935);transform-origin:center center;">Água</div>
<div class="t cn" style="left:316.5px;top:418.5px;width:400px;line-height:24px;text-align:center;transform:scaleX(1.1093);transform-origin:center center;">07/02/2024</div>
<div class="t cn" style="left:458.0px;top:418.5px;width:400px;line-height:24px;text-align:center;transform:scaleX(1.0000);transform-origin:center center;">R$ 58,00</div>
<div class="t c" style="left:129.5px;top:443.8px;width:400px;line-height:24px;text-align:center;transform:scaleX(0.9444);transform-origin:center center;">Gás</div>
<div class="t cn" style="left:316.5px;top:443.5px;width:400px;line-height:24px;text-align:center;transform:scaleX(1.1093);transform-origin:center center;">08/02/2024</div>
<div class="t cn" style="left:458.0px;top:443.5px;width:400px;line-height:24px;text-align:center;transform:scaleX(1.0000);transform-origin:center center;">R$ 36,00</div>
<div class="t c" style="left:129.5px;top:468.8px;width:400px;line-height:24px;text-align:center;transform:scaleX(1.0412);transform-origin:center center;">Parcela do Carro 5 de 30</div>
<div class="t cn" style="left:316.5px;top:468.5px;width:400px;line-height:24px;text-align:center;transform:scaleX(1.1093);transform-origin:center center;">09/02/2024</div>
<div class="t cn" style="left:458.0px;top:468.5px;width:400px;line-height:24px;text-align:center;transform:scaleX(0.9990);transform-origin:center center;">R$ 850,00</div>
<div style="position:absolute;left:721px;top:316px;width:480px;height:640px;border:2px solid #7f7f7f;border-bottom:none;background:#fff"></div>
<div style="position:absolute;left:723px;top:318px;width:476px;height:24px;background:#002060"></div>
<div style="position:absolute;left:723px;top:342px;width:476px;height:26px;background:#ddebf7"></div>
<div class="t cb" style="left:761.0px;top:318.2px;width:400px;line-height:24px;text-align:center;transform:scaleX(0.9839);transform-origin:center center;">GASTOS VARIÁVEIS FEVEREIRO</div>
<div style="position:absolute;left:723px;top:392px;width:476px;height:1px;background:#d9d9d9"></div>
<div style="position:absolute;left:723px;top:417px;width:476px;height:1px;background:#d9d9d9"></div>
<div style="position:absolute;left:723px;top:442px;width:476px;height:1px;background:#d9d9d9"></div>
<div style="position:absolute;left:723px;top:467px;width:476px;height:1px;background:#d9d9d9"></div>
<div style="position:absolute;left:723px;top:492px;width:476px;height:1px;background:#d9d9d9"></div>
<div style="position:absolute;left:723px;top:517px;width:476px;height:1px;background:#d9d9d9"></div>
<div style="position:absolute;left:723px;top:542px;width:476px;height:1px;background:#d9d9d9"></div>
<div style="position:absolute;left:723px;top:567px;width:476px;height:1px;background:#d9d9d9"></div>
<div style="position:absolute;left:723px;top:592px;width:476px;height:1px;background:#d9d9d9"></div>
<div style="position:absolute;left:723px;top:617px;width:476px;height:1px;background:#d9d9d9"></div>
<div style="position:absolute;left:723px;top:642px;width:476px;height:1px;background:#d9d9d9"></div>
<div style="position:absolute;left:723px;top:667px;width:476px;height:1px;background:#d9d9d9"></div>
<div style="position:absolute;left:723px;top:692px;width:476px;height:1px;background:#d9d9d9"></div>
<div style="position:absolute;left:723px;top:717px;width:476px;height:1px;background:#d9d9d9"></div>
<div style="position:absolute;left:723px;top:742px;width:476px;height:1px;background:#d9d9d9"></div>
<div style="position:absolute;left:723px;top:767px;width:476px;height:1px;background:#d9d9d9"></div>
<div style="position:absolute;left:723px;top:792px;width:476px;height:1px;background:#d9d9d9"></div>
<div style="position:absolute;left:723px;top:817px;width:476px;height:1px;background:#d9d9d9"></div>
<div style="position:absolute;left:723px;top:842px;width:476px;height:1px;background:#d9d9d9"></div>
<div style="position:absolute;left:723px;top:867px;width:476px;height:1px;background:#d9d9d9"></div>
<div style="position:absolute;left:723px;top:892px;width:476px;height:1px;background:#d9d9d9"></div>
<div style="position:absolute;left:723px;top:917px;width:476px;height:1px;background:#d9d9d9"></div>
<div style="position:absolute;left:723px;top:942px;width:476px;height:1px;background:#d9d9d9"></div>
<div style="position:absolute;left:920px;top:343px;width:1px;height:25px;background:#e9f0f7"></div>
<div style="position:absolute;left:920px;top:368px;width:1px;height:590px;background:#d9d9d9"></div>
<div style="position:absolute;left:1080px;top:343px;width:1px;height:25px;background:#e9f0f7"></div>
<div style="position:absolute;left:1080px;top:368px;width:1px;height:590px;background:#d9d9d9"></div>
<div class="t cbn" style="left:621.5px;top:343.2px;width:400px;line-height:24px;text-align:center;transform:scaleX(1.0135);transform-origin:center center;">Gastos Variáveis</div>
<div class="t cbn" style="left:800.5px;top:343.2px;width:400px;line-height:24px;text-align:center;transform:scaleX(1.0682);transform-origin:center center;">Data de Pagamento</div>
<div class="t cbn" style="left:940.5px;top:343.2px;width:400px;line-height:24px;text-align:center;transform:scaleX(1.0902);transform-origin:center center;">Valor</div>
<div class="t c" style="left:621.5px;top:368.8px;width:400px;line-height:24px;text-align:center;transform:scaleX(1.0785);transform-origin:center center;">Material Escolar</div>
<div class="t cn" style="left:800.5px;top:368.5px;width:400px;line-height:24px;text-align:center;transform:scaleX(1.1093);transform-origin:center center;">05/02/2024</div>
<div class="t cn" style="left:940.5px;top:368.5px;width:400px;line-height:24px;text-align:center;transform:scaleX(0.9990);transform-origin:center center;">R$ 250,00</div>
<div class="t c" style="left:621.5px;top:393.8px;width:400px;line-height:24px;text-align:center;transform:scaleX(1.0636);transform-origin:center center;">Dentista</div>
<div class="t cn" style="left:800.5px;top:393.5px;width:400px;line-height:24px;text-align:center;transform:scaleX(1.1093);transform-origin:center center;">06/02/2024</div>
<div class="t cn" style="left:940.5px;top:393.5px;width:400px;line-height:24px;text-align:center;transform:scaleX(0.9990);transform-origin:center center;">R$ 380,00</div>
<div class="t c" style="left:621.5px;top:418.8px;width:400px;line-height:24px;text-align:center;transform:scaleX(1.0299);transform-origin:center center;">Cinema</div>
<div class="t cn" style="left:800.5px;top:418.5px;width:400px;line-height:24px;text-align:center;transform:scaleX(1.1093);transform-origin:center center;">07/02/2024</div>
<div class="t cn" style="left:940.5px;top:418.5px;width:400px;line-height:24px;text-align:center;transform:scaleX(0.9990);transform-origin:center center;">R$ 100,00</div>
<div class="t c" style="left:621.5px;top:443.8px;width:400px;line-height:24px;text-align:center;transform:scaleX(1.0263);transform-origin:center center;">Presentes</div>
<div class="t cn" style="left:800.5px;top:443.5px;width:400px;line-height:24px;text-align:center;transform:scaleX(1.1093);transform-origin:center center;">08/02/2024</div>
<div class="t cn" style="left:940.5px;top:443.5px;width:400px;line-height:24px;text-align:center;transform:scaleX(0.9990);transform-origin:center center;">R$ 250,00</div>
<div class="t c" style="left:621.5px;top:468.8px;width:400px;line-height:24px;text-align:center;transform:scaleX(0.9966);transform-origin:center center;">Passagens aéreas</div>
<div class="t cn" style="left:800.5px;top:468.5px;width:400px;line-height:24px;text-align:center;transform:scaleX(1.1093);transform-origin:center center;">09/02/2024</div>
<div class="t cn" style="left:940.5px;top:468.5px;width:400px;line-height:24px;text-align:center;transform:scaleX(0.9990);transform-origin:center center;">R$ 720,00</div>
<div style="position:absolute;left:1209px;top:316px;width:451px;height:640px;border:2px solid #7f7f7f;border-bottom:none;background:#fff"></div>
<div style="position:absolute;left:1211px;top:318px;width:447px;height:24px;background:#002060"></div>
<div style="position:absolute;left:1211px;top:342px;width:447px;height:26px;background:#ddebf7"></div>
<div style="position:absolute;left:1211px;top:341px;width:447px;height:1px;background:#ece8e6"></div>
<div class="t cb" style="left:1234.5px;top:318.2px;width:400px;line-height:24px;text-align:center;transform:scaleX(0.9771);transform-origin:center center;">RECEBIMENTOS DE FEVEREIRO</div>
<div style="position:absolute;left:1211px;top:391px;width:447px;height:2px;background:#e2e2e2"></div>
<div style="position:absolute;left:1211px;top:416px;width:447px;height:2px;background:#e2e2e2"></div>
<div style="position:absolute;left:1211px;top:441px;width:447px;height:2px;background:#e2e2e2"></div>
<div style="position:absolute;left:1211px;top:466px;width:447px;height:2px;background:#e2e2e2"></div>
<div style="position:absolute;left:1211px;top:491px;width:447px;height:2px;background:#e2e2e2"></div>
<div style="position:absolute;left:1211px;top:516px;width:447px;height:2px;background:#e2e2e2"></div>
<div style="position:absolute;left:1211px;top:541px;width:447px;height:2px;background:#e2e2e2"></div>
<div style="position:absolute;left:1211px;top:566px;width:447px;height:2px;background:#e2e2e2"></div>
<div style="position:absolute;left:1211px;top:591px;width:447px;height:2px;background:#e2e2e2"></div>
<div style="position:absolute;left:1211px;top:616px;width:447px;height:2px;background:#e2e2e2"></div>
<div style="position:absolute;left:1211px;top:641px;width:447px;height:2px;background:#e2e2e2"></div>
<div style="position:absolute;left:1211px;top:666px;width:447px;height:2px;background:#e2e2e2"></div>
<div style="position:absolute;left:1211px;top:691px;width:447px;height:2px;background:#e2e2e2"></div>
<div style="position:absolute;left:1211px;top:716px;width:447px;height:2px;background:#e2e2e2"></div>
<div style="position:absolute;left:1211px;top:741px;width:447px;height:2px;background:#e2e2e2"></div>
<div style="position:absolute;left:1211px;top:766px;width:447px;height:2px;background:#e2e2e2"></div>
<div style="position:absolute;left:1211px;top:791px;width:447px;height:2px;background:#e2e2e2"></div>
<div style="position:absolute;left:1211px;top:816px;width:447px;height:2px;background:#e2e2e2"></div>
<div style="position:absolute;left:1211px;top:841px;width:447px;height:2px;background:#e2e2e2"></div>
<div style="position:absolute;left:1211px;top:866px;width:447px;height:2px;background:#e2e2e2"></div>
<div style="position:absolute;left:1211px;top:891px;width:447px;height:2px;background:#e2e2e2"></div>
<div style="position:absolute;left:1211px;top:916px;width:447px;height:2px;background:#e2e2e2"></div>
<div style="position:absolute;left:1211px;top:941px;width:447px;height:2px;background:#e2e2e2"></div>
<div style="position:absolute;left:1409px;top:343px;width:2px;height:25px;background:#e9f0f7"></div>
<div style="position:absolute;left:1409px;top:368px;width:2px;height:590px;background:#e2e2e2"></div>
<div style="position:absolute;left:1538px;top:343px;width:2px;height:25px;background:#e9f0f7"></div>
<div style="position:absolute;left:1538px;top:368px;width:2px;height:590px;background:#e2e2e2"></div>
<div class="t cbn" style="left:1110.5px;top:343.2px;width:400px;line-height:24px;text-align:center;transform:scaleX(0.9970);transform-origin:center center;">Descrição</div>
<div class="t cbn" style="left:1275.0px;top:343.2px;width:400px;line-height:24px;text-align:center;transform:scaleX(1.0458);transform-origin:center center;">Data</div>
<div class="t cbn" style="left:1399.5px;top:343.2px;width:400px;line-height:24px;text-align:center;transform:scaleX(1.0902);transform-origin:center center;">Valor</div>
<div class="t c" style="left:1110.5px;top:368.8px;width:400px;line-height:24px;text-align:center;transform:scaleX(1.0438);transform-origin:center center;">Comissão</div>
<div class="t cn" style="left:1275.0px;top:368.5px;width:400px;line-height:24px;text-align:center;transform:scaleX(1.1093);transform-origin:center center;">03/02/2024</div>
<div class="t cn" style="left:1399.5px;top:368.5px;width:400px;line-height:24px;text-align:center;transform:scaleX(0.9990);transform-origin:center center;">R$ 250,00</div>
<div class="t c" style="left:1110.5px;top:393.8px;width:400px;line-height:24px;text-align:center;transform:scaleX(1.0708);transform-origin:center center;">Salário</div>
<div class="t cn" style="left:1275.0px;top:393.5px;width:400px;line-height:24px;text-align:center;transform:scaleX(1.1093);transform-origin:center center;">05/02/2024</div>
<div class="t cn" style="left:1399.5px;top:393.5px;width:400px;line-height:24px;text-align:center;transform:scaleX(1.0166);transform-origin:center center;">R$ 8.500,00</div>
<div class="t c" style="left:1110.5px;top:418.8px;width:400px;line-height:24px;text-align:center;transform:scaleX(1.0438);transform-origin:center center;">Comissão</div>
<div class="t cn" style="left:1275.0px;top:418.5px;width:400px;line-height:24px;text-align:center;transform:scaleX(1.1093);transform-origin:center center;">10/02/2024</div>
<div class="t cn" style="left:1399.5px;top:418.5px;width:400px;line-height:24px;text-align:center;transform:scaleX(0.9990);transform-origin:center center;">R$ 250,00</div>
<div class="t c" style="left:1110.5px;top:443.8px;width:400px;line-height:24px;text-align:center;transform:scaleX(1.0438);transform-origin:center center;">Comissão</div>
<div class="t cn" style="left:1275.0px;top:443.5px;width:400px;line-height:24px;text-align:center;transform:scaleX(1.1260);transform-origin:center center;">11/02/2024</div>
<div class="t cn" style="left:1399.5px;top:443.5px;width:400px;line-height:24px;text-align:center;transform:scaleX(0.9990);transform-origin:center center;">R$ 250,00</div>
<div class="t c" style="left:1110.5px;top:468.8px;width:400px;line-height:24px;text-align:center;transform:scaleX(1.0438);transform-origin:center center;">Comissão</div>
<div class="t cn" style="left:1275.0px;top:468.5px;width:400px;line-height:24px;text-align:center;transform:scaleX(1.1093);transform-origin:center center;">12/02/2024</div>
<div class="t cn" style="left:1399.5px;top:468.5px;width:400px;line-height:24px;text-align:center;transform:scaleX(0.9990);transform-origin:center center;">R$ 250,00</div>
<div class="t c" style="left:1110.5px;top:493.8px;width:400px;line-height:24px;text-align:center;transform:scaleX(1.0438);transform-origin:center center;">Comissão</div>
<div class="t cn" style="left:1275.0px;top:493.5px;width:400px;line-height:24px;text-align:center;transform:scaleX(1.1093);transform-origin:center center;">13/02/2024</div>
<div class="t cn" style="left:1399.5px;top:493.5px;width:400px;line-height:24px;text-align:center;transform:scaleX(0.9990);transform-origin:center center;">R$ 250,00</div>
<div class="t c" style="left:1110.5px;top:518.8px;width:400px;line-height:24px;text-align:center;transform:scaleX(1.0438);transform-origin:center center;">Comissão</div>
<div class="t cn" style="left:1275.0px;top:518.5px;width:400px;line-height:24px;text-align:center;transform:scaleX(1.1093);transform-origin:center center;">14/02/2024</div>
<div class="t cn" style="left:1399.5px;top:518.5px;width:400px;line-height:24px;text-align:center;transform:scaleX(0.9990);transform-origin:center center;">R$ 300,00</div>
<div class="t c" style="left:1110.5px;top:543.8px;width:400px;line-height:24px;text-align:center;transform:scaleX(1.0438);transform-origin:center center;">Comissão</div>
<div class="t cn" style="left:1275.0px;top:543.5px;width:400px;line-height:24px;text-align:center;transform:scaleX(1.1093);transform-origin:center center;">15/02/2024</div>
<div class="t cn" style="left:1399.5px;top:543.5px;width:400px;line-height:24px;text-align:center;transform:scaleX(0.9990);transform-origin:center center;">R$ 500,00</div>
<div style="position:absolute;left:1671px;top:317px;width:175px;height:26px;background:#002060"></div>
<div class="t cb" style="left:1558.5px;top:318.2px;width:400px;line-height:24px;text-align:center;transform:scaleX(0.9842);transform-origin:center center;">TOTAL DE ENTRADAS</div>
<div class="t cn" style="left:1558.5px;top:343.5px;width:400px;line-height:24px;text-align:center;transform:scaleX(1.0197);transform-origin:center center;">R$ 10.550,00</div>
<div style="position:absolute;left:1671px;top:367px;width:175px;height:26px;background:#002060"></div>
<div class="t cb" style="left:1558.5px;top:368.2px;width:400px;line-height:24px;text-align:center;transform:scaleX(0.9860);transform-origin:center center;">TOTAL DE SAÍDAS</div>
<div class="t cn" style="left:1558.5px;top:393.5px;width:400px;line-height:24px;text-align:center;transform:scaleX(1.0130);transform-origin:center center;">R$ 3.994,00</div>
<div style="position:absolute;left:1671px;top:417px;width:175px;height:26px;background:#002060"></div>
<div class="t cb" style="left:1558.5px;top:418.2px;width:400px;line-height:24px;text-align:center;transform:scaleX(0.9917);transform-origin:center center;">SALDO MENSAL</div>
<div class="t cn" style="left:1558.5px;top:443.5px;width:400px;line-height:24px;text-align:center;transform:scaleX(1.0130);transform-origin:center center;">R$ 6.556,00</div>
<div style="position:absolute;left:1671px;top:467px;width:175px;height:26px;background:#002060"></div>
<div class="t cb" style="left:1558.5px;top:468.2px;width:400px;line-height:24px;text-align:center;transform:scaleX(1.0186);transform-origin:center center;">SALDO ACUMULADO</div>
<div class="t cn" style="left:1558.5px;top:493.5px;width:400px;line-height:24px;text-align:center;transform:scaleX(1.0130);transform-origin:center center;">R$ 6.556,00</div>
<div style="position:absolute;left:1671px;top:517px;width:175px;height:25px;background:#00b050"></div>
<div class="t cb" style="left:1558.5px;top:518.5px;width:400px;line-height:24px;text-align:center;transform:scaleX(1.0188);transform-origin:center center;">Saldo Positivo</div>
<div style="position:absolute;left:1895px;top:272px;width:25px;height:681px;background:#f0f0f0"></div>
<div style="position:absolute;left:1897px;top:269px;width:21px;height:690px;background:#f5f5f5;border-radius:10.5px 10.5px 0 0"></div>
<svg style="left:1900.6px;top:274.3px" width="14" height="10" viewBox="0 0 14 10"><path d="M7 2 L11.8 8.3 H2.2 Z" fill="#767676" stroke="#767676" stroke-width="1.6" stroke-linejoin="round"/></svg>
<div style="position:absolute;left:1902px;top:290px;width:11px;height:38px;background:#767676;border-radius:5.5px"></div>
<svg style="left:1900.6px;top:938.5px" width="14" height="10" viewBox="0 0 14 10"><path d="M7 8 L11.8 1.7 H2.2 Z" fill="#767676" stroke="#767676" stroke-width="1.6" stroke-linejoin="round"/></svg>
<div style="position:absolute;left:0px;top:953px;width:1920px;height:40px;background:#f0f0f0"></div>
<div style="position:absolute;left:1897px;top:953px;width:21px;height:3px;background:#f5f5f5;border-radius:0 0 9px 9px"></div>
<svg style="left:28px;top:964px" width="60" height="16" viewBox="0 0 60 16"><path d="M11 2 L5 8 L11 14" fill="none" stroke="#b0b0b0" stroke-width="1.3"/><path d="M45 2 L51 8 L45 14" fill="none" stroke="#b0b0b0" stroke-width="1.3"/></svg>
<div style="position:absolute;left:298px;top:953px;width:50px;height:35px;background:#fff;border-radius:0 0 6px 6px;box-shadow:0 0.5px 1.5px rgba(0,0,0,0.25)"></div>
<div style="position:absolute;left:298px;top:950px;width:50px;height:6px;background:#fff"></div>
<svg style="left:293px;top:953px" width="60" height="6" viewBox="0 0 60 6"><path d="M0 0 Q5 0 5 5 V0 Z M60 0 Q55 0 55 5 V0 Z" fill="#fff"/></svg>
<div class="t st" style="left:-19.0px;top:960.5px;width:400px;line-height:24px;text-align:center;transform:scale(0.9804,1.1);transform-origin:center center;">PAINEL</div>
<div class="t st" style="left:60.0px;top:960.5px;width:400px;line-height:24px;text-align:center;transform:scale(1.0005,1.1);transform-origin:center center;">JAN</div>
<div class="t stb" style="left:123.25px;top:957.0px;width:400px;line-height:24px;text-align:center;transform:scale(0.9249,1.1);transform-origin:center center;">FEV</div>
<div class="t st" style="left:190.0px;top:960.5px;width:400px;line-height:24px;text-align:center;transform:scale(1.0427,1.1);transform-origin:center center;">MAR</div>
<div class="t st" style="left:256.75px;top:960.5px;width:400px;line-height:24px;text-align:center;transform:scale(0.9637,1.1);transform-origin:center center;">ABR</div>
<div class="t st" style="left:322.75px;top:960.5px;width:400px;line-height:24px;text-align:center;transform:scale(1.0803,1.1);transform-origin:center center;">MAI</div>
<div class="t st" style="left:389.0px;top:960.5px;width:400px;line-height:24px;text-align:center;transform:scale(1.0035,1.1);transform-origin:center center;">JUN</div>
<div class="t st" style="left:451.0px;top:960.5px;width:400px;line-height:24px;text-align:center;transform:scale(0.9257,1.1);transform-origin:center center;">JUL</div>
<div class="t st" style="left:516.25px;top:960.5px;width:400px;line-height:24px;text-align:center;transform:scale(1.0013,1.1);transform-origin:center center;">AGO</div>
<div class="t st" style="left:580.5px;top:960.5px;width:400px;line-height:24px;text-align:center;transform:scale(0.8465,1.1);transform-origin:center center;">SET</div>
<div class="t st" style="left:644.0px;top:960.5px;width:400px;line-height:24px;text-align:center;transform:scale(0.9821,1.1);transform-origin:center center;">OUT</div>
<div class="t st" style="left:712.5px;top:960.5px;width:400px;line-height:24px;text-align:center;transform:scale(1.0411,1.1);transform-origin:center center;">NOV</div>
<div class="t st" style="left:779.5px;top:960.5px;width:400px;line-height:24px;text-align:center;transform:scale(0.9451,1.1);transform-origin:center center;">DEZ</div>
<div class="t st" style="left:910.0px;top:960.5px;width:400px;line-height:24px;text-align:center;transform:scale(0.9991,1.1);transform-origin:center center;">RESULTADO ANUAL</div>
<div class="t st" style="left:1079.5px;top:960.5px;width:400px;line-height:24px;text-align:center;transform:scale(0.9393,1.1);transform-origin:center center;">INSTRUÇÕES</div>
<div style="position:absolute;left:308px;top:983px;width:30px;height:2px;background:#107c41;border-radius:1px"></div>
<div style="position:absolute;left:227px;top:961px;width:1px;height:24px;background:#d6d6d6"></div>
<div style="position:absolute;left:292px;top:961px;width:1px;height:24px;background:#d6d6d6"></div>
<div style="position:absolute;left:353px;top:961px;width:1px;height:24px;background:#d6d6d6"></div>
<div style="position:absolute;left:424px;top:961px;width:1px;height:24px;background:#d6d6d6"></div>
<div style="position:absolute;left:490px;top:961px;width:1px;height:24px;background:#d6d6d6"></div>
<div style="position:absolute;left:555px;top:961px;width:1px;height:24px;background:#d6d6d6"></div>
<div style="position:absolute;left:621px;top:961px;width:1px;height:24px;background:#d6d6d6"></div>
<div style="position:absolute;left:680px;top:961px;width:1px;height:24px;background:#d6d6d6"></div>
<div style="position:absolute;left:750px;top:961px;width:1px;height:24px;background:#d6d6d6"></div>
<div style="position:absolute;left:810px;top:961px;width:1px;height:24px;background:#d6d6d6"></div>
<div style="position:absolute;left:877px;top:961px;width:1px;height:24px;background:#d6d6d6"></div>
<div style="position:absolute;left:947px;top:961px;width:1px;height:24px;background:#d6d6d6"></div>
<div style="position:absolute;left:1011px;top:961px;width:1px;height:24px;background:#d6d6d6"></div>
<div style="position:absolute;left:1208px;top:961px;width:1px;height:24px;background:#d6d6d6"></div>
<div style="position:absolute;left:1346px;top:961px;width:1px;height:24px;background:#d6d6d6"></div>
<svg style="left:1397px;top:964px" width="16" height="16" viewBox="0 0 16 16"><path d="M8 1.5 V14.5 M1.5 8 H14.5" stroke="#303030" stroke-width="1.3"/></svg>
<div style="position:absolute;left:1571.6px;top:966.4px;width:2.8px;height:2.8px;background:#3a3a3a;border-radius:0.6px"></div>
<div style="position:absolute;left:1571.6px;top:971.8px;width:2.8px;height:2.8px;background:#3a3a3a;border-radius:0.6px"></div>
<div style="position:absolute;left:1571.6px;top:977.2px;width:2.8px;height:2.8px;background:#3a3a3a;border-radius:0.6px"></div>
<div style="position:absolute;left:1593.5px;top:962px;width:301px;height:22px;background:#f5f5f5;border-radius:11px"></div>
<svg style="left:1598px;top:966px" width="10" height="14" viewBox="0 0 10 14"><path d="M1.5 7 L8 1.5 V12.5 Z" fill="#6e6e6e" stroke="#6e6e6e" stroke-width="1" stroke-linejoin="round"/></svg>
<div style="position:absolute;left:1614px;top:966.6px;width:217px;height:11.2px;background:#767676;border-radius:5.6px"></div>
<svg style="left:1879px;top:966px" width="10" height="14" viewBox="0 0 10 14"><path d="M8.5 7 L2 1.5 V12.5 Z" fill="#6e6e6e" stroke="#6e6e6e" stroke-width="1" stroke-linejoin="round"/></svg>
<div style="position:absolute;left:0px;top:993px;width:1920px;height:27px;background:#f3f3f3"></div>
<svg style="left:14px;top:998.5px" width="20" height="18" viewBox="0 0 20 18"><path d="M1.5 2 H17.5 V5 H1.5 Z M1.5 5 V15.5 H9 M3.5 8 H7 M3.5 10.5 H7 M3.5 13 H7" fill="none" stroke="#444" stroke-width="1.1"/><circle cx="12.5" cy="11" r="4" fill="none" stroke="#444" stroke-width="1.2"/><circle cx="12.5" cy="11" r="1.7" fill="#444"/></svg>
<svg style="left:54px;top:997px" width="20" height="20" viewBox="0 0 20 20"><circle cx="8.5" cy="3.3" r="1.9" fill="none" stroke="#303030" stroke-width="1.1"/><path d="M2 6.2 L6.8 7.5 H10.2 L15 6.2 L15.4 7.6 L10.8 9.4 V12 L12 17.5 L10.7 18 L8.5 12.5 L6.3 18 L5 17.5 L6.2 12 V9.4 L1.6 7.6 Z" fill="none" stroke="#303030" stroke-width="1" stroke-linejoin="round"/><path d="M12.5 12.5 L18 18 M18 12.5 L12.5 18" stroke="#303030" stroke-width="1.2"/></svg>
<div class="t stat" style="left:77.5px;top:995.0px;line-height:24px;transform:scaleX(1.0750);transform-origin:left center;">Acessibilidade: investigar</div>
<div style="position:absolute;left:1548px;top:994px;width:50px;height:26px;background:#dedede"></div>
<svg style="left:1564px;top:998px" width="18" height="18" viewBox="0 0 18 18"><path d="M1.5 1.5 H16.5 V16.5 H1.5 Z M1.5 6.5 H16.5 M1.5 11.5 H16.5 M6.5 1.5 V16.5 M11.5 1.5 V16.5" fill="none" stroke="#3a3a3a" stroke-width="1.7"/></svg>
<svg style="left:1614px;top:998px" width="18" height="18" viewBox="0 0 18 18"><path d="M1.5 1.5 H16.5 V16.5 H1.5 Z" fill="none" stroke="#3a3a3a" stroke-width="1.6"/><path d="M5.2 5.2 H12.8 V12.8 H5.2 Z M5.2 7.7 H12.8 M5.2 10.3 H12.8" fill="none" stroke="#3a3a3a" stroke-width="1.2"/></svg>
<svg style="left:1664px;top:998px" width="18" height="18" viewBox="0 0 18 18"><path d="M1.5 1.5 H16.5 V16.5 H1.5 Z M1.5 9.5 H11.5 V1.5 M6.5 1.5 V9.5" fill="none" stroke="#3a3a3a" stroke-width="1.6"/></svg>
<div style="position:absolute;left:1705px;top:1006px;width:9px;height:1px;background:#444"></div>
<div style="position:absolute;left:1721px;top:1006.6px;width:125px;height:1px;background:#8a8a8a"></div>
<div style="position:absolute;left:1781.3px;top:1000px;width:5.5px;height:14px;background:#6a6a6a;border-radius:1px"></div>
<div style="position:absolute;left:1852px;top:1006px;width:10px;height:1px;background:#444"></div>
<div style="position:absolute;left:1856.5px;top:1001.5px;width:1px;height:10px;background:#444"></div>
<div class="t " style="left:1878.5px;top:995.6px;line-height:24px;font-size:12.4px;color:#303030">100%</div>
<div style="position:absolute;left:0px;top:1020px;width:1920px;height:1px;background:#c2bfbb"></div>
<div style="position:absolute;left:0px;top:1021px;width:1920px;height:1px;background:linear-gradient(90deg,#e4e4e4 0%,#ead9c6 20%,#e6d8c8 50%,#d4dae0 80%,#d0d6dc 100%)"></div>
</div></body></html>
